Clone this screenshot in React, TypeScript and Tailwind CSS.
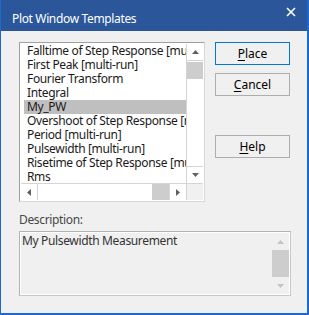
import React from "react";

const FONT = { fontFamily: '"Noto Sans", "Open Sans", sans-serif' };

function Tri({ dir, color }: { dir: "up" | "down" | "left" | "right"; color: string }) {
  const pts: Record<string, string> = {
    up: "0,4 7,4 3.5,0",
    down: "0,0 7,0 3.5,4",
    left: "4,0 4,7 0,3.5",
    right: "0,0 0,7 4,3.5",
  };
  const horiz = dir === "left" || dir === "right";
  return (
    <svg width={horiz ? 4 : 7} height={horiz ? 7 : 4} viewBox={horiz ? "0 0 4 7" : "0 0 7 4"}>
      <polygon points={pts[dir]} fill={color} />
    </svg>
  );
}

const items = [
  "Falltime of Step Response [multi-run]",
  "First Peak [multi-run]",
  "Fourier Transform",
  "Integral",
  "My_PW",
  "Overshoot of Step Response [multi-run]",
  "Period [multi-run]",
  "Pulsewidth [multi-run]",
  "Risetime of Step Response [multi-run]",
  "Rms",
];

function Btn({ first, rest, primary }: { first: string; rest: string; primary?: boolean }) {
  return (
    <div
      className={`w-[75px] h-[23px] flex items-center justify-center text-[12px] leading-4 text-black bg-[#f0f0f0] border ${
        primary ? "border-[#0078d7]" : "border-[#adadad]"
      }`}
    >
      <span>
        <span className="underline underline-offset-2">{first}</span>
        {rest}
      </span>
    </div>
  );
}

export default function App() {
  return (
    <div
      className="w-[309px] h-[315px] flex flex-col bg-[#f0f0f0] border-l border-r-2 border-b-2 border-[#1b6ad3] overflow-hidden"
      style={FONT}
    >
      {/* Title bar */}
      <div className="h-[31px] shrink-0 bg-[#2b579a] flex items-start justify-between pl-[11px] pr-[11px]">
        <div className="pt-[11px] text-[12px] leading-4 tracking-[-0.35px] text-white">Plot Window Templates</div>
        <div className="pt-[7px]">
          <svg width="10" height="10" viewBox="0 0 10 10">
            <path d="M1 1 L9 9 M9 1 L1 9" stroke="white" strokeWidth="1.6" />
          </svg>
        </div>
      </div>

      {/* Body */}
      <div className="flex flex-col pl-[18px] pt-[11px]">
        <div className="flex gap-[10px]">
          {/* List box */}
          <div className="w-[186px] h-[160px] border border-t-[#a0a0a0] border-l-[#a0a0a0] border-r-[#d7d7d7] border-b-[#d7d7d7]">
            <div className="w-full h-full border border-white bg-white flex flex-col">
              <div className="flex h-[139px]">
                <div className="w-[165px] overflow-hidden pl-[3px] text-[12px] leading-[14px] tracking-[-0.35px] text-[#1a1a1a]">
                  {items.map((t) => (
                    <div
                      key={t}
                      className={`h-[14px] pl-[3px] whitespace-nowrap ${t === "My_PW" ? "bg-[#bfbfbf]" : ""}`}
                    >
                      {t}
                    </div>
                  ))}
                </div>
                {/* vertical scrollbar */}
                <div className="w-[17px] flex flex-col border-l border-[#d4d4d4] bg-white">
                  <div className="h-[17px] flex items-center justify-center border-b border-[#d4d4d4]">
                    <Tri dir="up" color="#606060" />
                  </div>
                  <div className="flex-1 pt-[1px]">
                    <div className="h-[17px] bg-[#cdcdcd]" />
                  </div>
                  <div className="h-[17px] flex items-center justify-center border-t border-[#d4d4d4]">
                    <Tri dir="down" color="#606060" />
                  </div>
                </div>
              </div>
              {/* horizontal scrollbar */}
              <div className="flex h-[17px] border-t border-[#d4d4d4]">
                <div className="w-[165px] flex bg-white">
                  <div className="w-[17px] flex items-center justify-center border-r border-[#d4d4d4]">
                    <Tri dir="left" color="#606060" />
                  </div>
                  <div className="flex-1 flex justify-end">
                    <div className="w-[17px] bg-[#cdcdcd]" />
                  </div>
                  <div className="w-[17px] flex items-center justify-center border-l border-[#d4d4d4]">
                    <Tri dir="right" color="#606060" />
                  </div>
                </div>
                <div className="w-[17px] bg-[#f0f0f0] border-l border-[#d4d4d4]" />
              </div>
            </div>
          </div>

          {/* Buttons */}
          <div className="flex flex-col">
            <Btn first="P" rest="lace" primary />
            <div className="h-[8px]" />
            <Btn first="C" rest="ancel" />
            <div className="h-[39px]" />
            <Btn first="H" rest="elp" />
          </div>
        </div>

        <div className="mt-[10px] text-[12px] leading-4 tracking-[-0.35px] text-[#474747]">Description:</div>

        <div className="mt-[3px] w-[272px] h-[65px] border border-t-[#b4b4b4] border-l-[#b4b4b4] border-r-[#c8c8c8] border-b-[#c8c8c8]">
          <div className="w-full h-full border border-white flex">
            <div className="flex-1 pl-[1px] pt-[1px] text-[12px] leading-[14px] tracking-[-0.35px] text-[#333333] whitespace-nowrap">
              My Pulsewidth Measurement
            </div>
            <div className="w-[17px] flex flex-col">
              <div className="h-[17px] flex items-center justify-center">
                <Tri dir="up" color="#c4c4c4" />
              </div>
              <div className="flex-1 bg-[#cdcdcd]" />
              <div className="h-[17px] flex items-center justify-center">
                <Tri dir="down" color="#c4c4c4" />
              </div>
            </div>
          </div>
        </div>
      </div>
    </div>
  );
}
